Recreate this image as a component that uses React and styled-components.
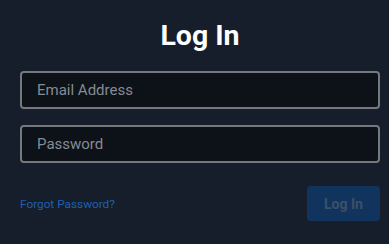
import React from 'react'
import styled, { createGlobalStyle } from 'styled-components'

const GlobalStyle = createGlobalStyle`
  html, body {
    margin: 0;
    padding: 0;
    background: #171e2b;
    font-family: Roboto, "Liberation Sans", sans-serif;
  }
`

const Page = styled.div`
  width: 389px;
  height: 244px;
  box-sizing: border-box;
  padding: 22px 9px 0 20px;
  background: #171e2b;
`

const Form = styled.form`
  width: 360px;
  display: flex;
  flex-direction: column;
`

const Title = styled.h1`
  margin: 0 0 21px;
  height: 28px;
  line-height: 28px;
  text-align: center;
  color: #ffffff;
  font-size: 28.5px;
  font-weight: 700;
`

const Input = styled.input`
  box-sizing: border-box;
  width: 100%;
  height: 38px;
  margin-bottom: ${(p) => p.$gap || 0}px;
  padding: 0 15px;
  background: #0d1118;
  border: 2px solid #75787d;
  border-radius: 4px;
  color: #e6e6e6;
  font-family: Roboto, "Liberation Sans", sans-serif;
  font-size: 15px;
  outline: none;

  &::placeholder {
    color: #868b92;
  }
`

const Footer = styled.div`
  display: flex;
  align-items: center;
  justify-content: space-between;
  margin-top: 23px;
`

const ForgotLink = styled.a`
  color: #1f5fb0;
  font-size: 11.8px;
  text-decoration: none;
  cursor: pointer;
`

const SubmitButton = styled.button`
  width: 73px;
  height: 35px;
  border: none;
  border-radius: 4px;
  background: #11345e;
  color: #3e4f66;
  font-family: Roboto, "Liberation Sans", sans-serif;
  font-size: 14px;
  font-weight: 700;
  cursor: not-allowed;
`

const App = () => (
  <>
    <GlobalStyle />
    <Page>
      <Form onSubmit={(e) => e.preventDefault()}>
        <Title>Log In</Title>
        <Input type="email" placeholder="Email Address" $gap={16} />
        <Input type="password" placeholder="Password" />
        <Footer>
          <ForgotLink>Forgot Password?</ForgotLink>
          <SubmitButton type="submit" disabled>Log In</SubmitButton>
        </Footer>
      </Form>
    </Page>
  </>
)

export default App
